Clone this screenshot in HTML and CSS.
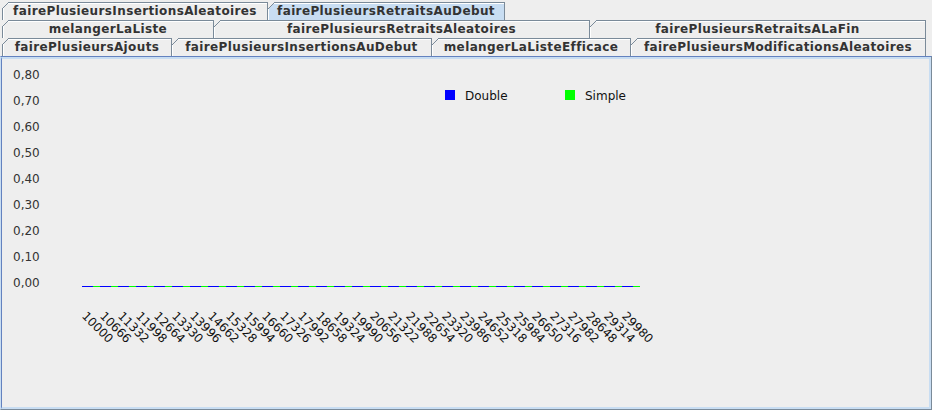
FILE: index.html
```html
<!DOCTYPE html>
<html>
<head>
<meta charset="utf-8">
<link rel="stylesheet" href="styles.css">
</head>
<body>
<div class="tabbed">
  <div class="tabs">
    <div class="row">
      <div class="tab first w266">fairePlusieursInsertionsAleatoires</div>
      <div class="tab sel w237">fairePlusieursRetraitsAuDebut</div>
    </div>
    <div class="row">
      <div class="tab first w212">melangerLaListe</div>
      <div class="tab w376">fairePlusieursRetraitsAleatoires</div>
      <div class="tab w336">fairePlusieursRetraitsALaFin</div>
    </div>
    <div class="row">
      <div class="tab first w170">fairePlusieursAjouts</div>
      <div class="tab w260">fairePlusieursInsertionsAuDebut</div>
      <div class="tab w199">melangerLaListeEfficace</div>
      <div class="tab w295">fairePlusieursModificationsAleatoires</div>
    </div>
  </div>
  <div class="panel">
    <div class="inner">
      <div class="chart">
        <div class="yaxis">
          <span>0,80</span><span>0,70</span><span>0,60</span><span>0,50</span><span>0,40</span><span>0,30</span><span>0,20</span><span>0,10</span><span>0,00</span>
        </div>
        <div class="plot">
          <div class="legend">
            <div class="item"><i class="sw blue"></i><span>Double</span></div>
            <div class="item"><i class="sw green"></i><span>Simple</span></div>
          </div>
          <div class="series"></div>
          <div class="xlabels">
            <div class="cell"><span>10000</span></div>
            <div class="cell"><span>10666</span></div>
            <div class="cell"><span>11332</span></div>
            <div class="cell"><span>11998</span></div>
            <div class="cell"><span>12664</span></div>
            <div class="cell"><span>13330</span></div>
            <div class="cell"><span>13996</span></div>
            <div class="cell"><span>14662</span></div>
            <div class="cell"><span>15328</span></div>
            <div class="cell"><span>15994</span></div>
            <div class="cell"><span>16660</span></div>
            <div class="cell"><span>17326</span></div>
            <div class="cell"><span>17992</span></div>
            <div class="cell"><span>18658</span></div>
            <div class="cell"><span>19324</span></div>
            <div class="cell"><span>19990</span></div>
            <div class="cell"><span>20656</span></div>
            <div class="cell"><span>21322</span></div>
            <div class="cell"><span>21988</span></div>
            <div class="cell"><span>22654</span></div>
            <div class="cell"><span>23320</span></div>
            <div class="cell"><span>23986</span></div>
            <div class="cell"><span>24652</span></div>
            <div class="cell"><span>25318</span></div>
            <div class="cell"><span>25984</span></div>
            <div class="cell"><span>26650</span></div>
            <div class="cell"><span>27316</span></div>
            <div class="cell"><span>27982</span></div>
            <div class="cell"><span>28648</span></div>
            <div class="cell"><span>29314</span></div>
            <div class="cell"><span>29980</span></div>
          </div>
        </div>
      </div>
    </div>
  </div>
</div>
</body>
</html>
```

FILE: styles.css
```css
html, body {
  margin: 0;
  padding: 0;
  background: #eeeeee;
}
body {
  width: 932px;
  height: 410px;
  overflow: hidden;
  font-family: "DejaVu Sans", sans-serif;
  color: #333333;
}
.tabbed {
  display: flex;
  flex-direction: column;
  height: 410px;
}
.tabs {
  padding: 2px 0 0 2px;
  display: flex;
  flex-direction: column;
}
.row {
  display: flex;
  height: 18px;
}
.tab {
  position: relative;
  box-sizing: border-box;
  flex: none;
  height: 18px;
  border-top: 1px solid #7a8a99;
  border-right: 1px solid #7a8a99;
  box-shadow: inset 1px 1px 0 #ffffff;
  background: #eeeeee;
  font-weight: bold;
  font-size: 12px;
  letter-spacing: 0.38px;
  line-height: 17px;
  text-align: center;
  white-space: nowrap;
  color: #333333;
}
.tab.first {
  border-left: 1px solid #7a8a99;
}
.tab::before {
  content: "";
  position: absolute;
  top: -1px;
  left: 0;
  width: 7px;
  height: 7px;
  background: linear-gradient(135deg, #eeeeee 0, #eeeeee calc(50% - 0.6px), #7a8a99 calc(50% - 0.6px), #7a8a99 calc(50% + 0.6px), transparent calc(50% + 0.6px));
}
.tab.first::before {
  left: -1px;
}
.tab.sel {
  background: #c8ddf2;
}
.w266 { width: 266px; }
.w237 { width: 237px; }
.w212 { width: 212px; }
.w376 { width: 376px; }
.w336 { width: 336px; }
.w170 { width: 170px; }
.w260 { width: 260px; }
.w199 { width: 199px; }
.w295 { width: 295px; }

.panel {
  flex: 1;
  display: flex;
  border-top: 1px solid #6382bf;
  border-left: 1px solid #c8ddf2;
  border-right: 1px solid #7a8a99;
  border-bottom: 1px solid #7a8a99;
}
.inner {
  flex: 1;
  border-top: 2px solid #c8ddf2;
  border-left: 1px solid #6382bf;
  border-right: 2px solid #c8ddf2;
  border-bottom: 2px solid #c8ddf2;
  background: #eeeeee;
}
.chart {
  display: flex;
  padding: 3px 0 0 11px;
  font-size: 12px;
}
.yaxis {
  flex: none;
  width: 27px;
  display: flex;
  flex-direction: column;
  line-height: 26px;
  color: #333333;
  white-space: nowrap;
}
.plot {
  margin-left: 42px;
  display: flex;
  flex-direction: column;
}
.legend {
  margin-top: 28px;
  padding-left: 363px;
  height: 10px;
  display: flex;
  color: #111111;
}
.item {
  width: 120px;
  display: flex;
  align-items: center;
  line-height: 14px;
  padding-top: 1px;
}
.sw {
  flex: none;
  width: 10px;
  height: 10px;
  margin-right: 10px;
  margin-top: -1px;
}
.sw.blue { background: #0000ff; }
.sw.green { background: #00ff00; }
.series {
  margin-top: 186px;
  width: 558px;
  height: 1px;
  background: repeating-linear-gradient(to right, #0000ff 0, #0000ff 11px, #00ff00 11px, #00ff00 18px);
}
.xlabels {
  margin-top: 22px;
  display: flex;
  color: #111111;
}
.cell {
  flex: none;
  width: 18px;
  box-sizing: border-box;
  padding-left: 7px;
  height: 14px;
}
.cell span {
  display: inline-block;
  white-space: nowrap;
  transform-origin: 0 0;
  transform: rotate(45deg);
}
```
